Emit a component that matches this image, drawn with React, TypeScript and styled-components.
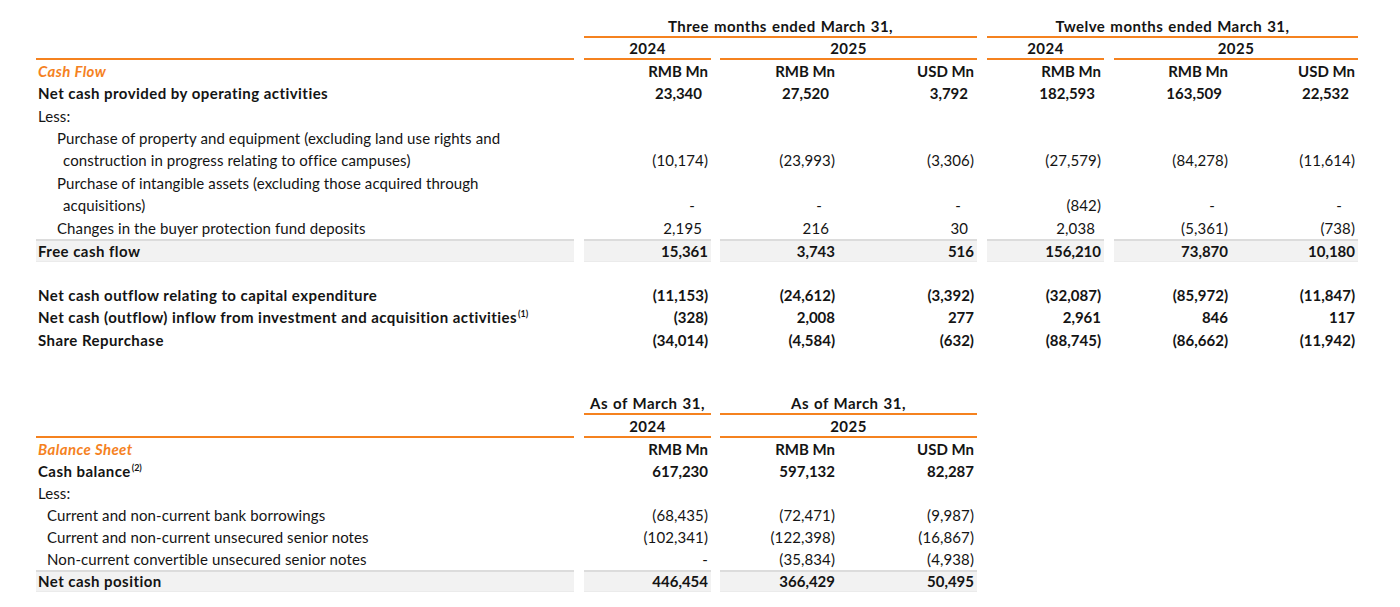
import React from 'react';
import styled, { createGlobalStyle, css } from 'styled-components';

const ORANGE = '#f5821f';

const GlobalStyle = createGlobalStyle`
  html, body { margin: 0; padding: 0; background: #fff; }
  body { font-family: Lato, "Open Sans", sans-serif; color: #141414; font-size: 15px; }
`;

const Page = styled.div`
  width: 1400px;
  height: 607px;
  box-sizing: border-box;
  padding: 16px 0 0 36px;
  display: flex;
  flex-direction: column;
  overflow: hidden;
`;

const Section = styled.section<{ $after?: number }>`
  display: flex;
  flex-direction: column;
  margin-bottom: ${(p) => p.$after ?? 0}px;
`;

const Row = styled.div<{ $h?: number }>`
  display: grid;
  grid-template-columns: 538px 10px 127px 9px 118px 139px 10px 117px 10px 117px 127px;
  height: ${(p) => p.$h ?? 22}px;
  align-items: stretch;
`;

const cellBase = css<{ $col: number; $span?: number }>`
  grid-column: ${(p) => p.$col} / span ${(p) => p.$span ?? 1};
  box-sizing: border-box;
  display: flex;
  white-space: nowrap;
  min-width: 0;
`;

const totalStyle = css`
  background: #f2f2f2;
  border-top: 2px solid #dcdcdc;
  border-bottom: 1px solid #ebebeb;
`;

const GroupHead = styled.div<{ $col: number; $span?: number; $rule?: boolean }>`
  ${cellBase};
  justify-content: center;
  align-items: center;
  font-weight: 700;
  letter-spacing: 0.45px;
  word-spacing: 1px;
  border-bottom: ${(p) => (p.$rule ? `2px solid ${ORANGE}` : 'none')};
`;

const SectionTitle = styled.div<{ $col: number; $span?: number }>`
  ${cellBase};
  align-items: center;
  padding-left: 2px;
  color: ${ORANGE};
  font-style: italic;
  font-weight: 700;
  letter-spacing: 0.4px;
`;

const Unit = styled.div<{ $col: number; $span?: number }>`
  ${cellBase};
  align-items: center;
  justify-content: flex-end;
  padding-right: 3px;
  font-weight: 700;
`;

const Label = styled.div<{ $col: number; $span?: number; $indent?: number; $bold?: boolean; $total?: boolean }>`
  ${cellBase};
  flex-direction: column;
  justify-content: flex-end;
  padding-left: ${(p) => 2 + (p.$indent ?? 0)}px;
  font-weight: ${(p) => (p.$bold ? 700 : 400)};
  letter-spacing: ${(p) => (p.$bold ? 0.45 : 0.1)}px;
  ${(p) => p.$total && totalStyle};
`;

const Line = styled.span<{ $cont?: boolean; $lh: number }>`
  display: block;
  height: ${(p) => p.$lh}px;
  line-height: ${(p) => p.$lh}px;
  padding-left: ${(p) => (p.$cont ? 6 : 0)}px;
`;

const Num = styled.div<{ $col: number; $span?: number; $pad?: number; $bold?: boolean; $total?: boolean; $lh: number }>`
  ${cellBase};
  align-items: flex-end;
  justify-content: flex-end;
  padding-right: ${(p) => 3 + (p.$pad ?? 0)}px;
  font-weight: ${(p) => (p.$bold ? 700 : 400)};
  letter-spacing: ${(p) => (p.$bold ? 0 : 0.1)}px;
  line-height: ${(p) => p.$lh}px;
  ${(p) => p.$total && totalStyle};
`;

const Sup = styled.sup`
  font-size: 9px;
  line-height: 0;
  vertical-align: 6px;
  margin-left: 1px;
  letter-spacing: 0;
`;

const CF_COLS = [3, 5, 6, 8, 10, 11];
const BS_COLS = [3, 5, 6];

type RowData = {
  label?: string[];
  sup?: string;
  indent?: number;
  bold?: boolean;
  total?: boolean;
  vals?: string[];
  pos?: number; // padding for positive values (accounting)
  dash?: number; // padding for dashes
  h?: number;
};

const cashFlow: RowData[] = [
  { label: ['Net cash provided by operating activities'], bold: true, pos: 6, h: 22.5, vals: ['23,340', '27,520', '3,792', '182,593', '163,509', '22,532'] },
  { label: ['Less:'] },
  {
    label: ['Purchase of property and equipment (excluding land use rights and', 'construction in progress relating to office campuses)'],
    indent: 19, h: 45,
    vals: ['(10,174)', '(23,993)', '(3,306)', '(27,579)', '(84,278)', '(11,614)'],
  },
  {
    label: ['Purchase of intangible assets (excluding those acquired through', 'acquisitions)'],
    indent: 19, h: 45, dash: 13,
    vals: ['-', '-', '-', '(842)', '-', '-'],
  },
  { label: ['Changes in the buyer protection fund deposits'], indent: 19, pos: 6, vals: ['2,195', '216', '30', '2,038', '(5,361)', '(738)'] },
  { label: ['Free cash flow'], bold: true, total: true, h: 23, vals: ['15,361', '3,743', '516', '156,210', '73,870', '10,180'] },
  { h: 22 },
  { label: ['Net cash outflow relating to capital expenditure'], bold: true, h: 22.5, vals: ['(11,153)', '(24,612)', '(3,392)', '(32,087)', '(85,972)', '(11,847)'] },
  { label: ['Net cash (outflow) inflow from investment and acquisition activities'], sup: '(1)', bold: true, h: 22.5, vals: ['(328)', '2,008', '277', '2,961', '846', '117'] },
  { label: ['Share Repurchase'], bold: true, h: 22.5, vals: ['(34,014)', '(4,584)', '(632)', '(88,745)', '(86,662)', '(11,942)'] },
];

const balance: RowData[] = [
  { label: ['Cash balance'], sup: '(2)', bold: true, vals: ['617,230', '597,132', '82,287'] },
  { label: ['Less:'] },
  { label: ['Current and non-current bank borrowings'], indent: 9, vals: ['(68,435)', '(72,471)', '(9,987)'] },
  { label: ['Current and non-current unsecured senior notes'], indent: 9, vals: ['(102,341)', '(122,398)', '(16,867)'] },
  { label: ['Non-current convertible unsecured senior notes'], indent: 9, vals: ['-', '(35,834)', '(4,938)'] },
  { label: ['Net cash position'], bold: true, total: true, h: 22, vals: ['446,454', '366,429', '50,495'] },
];

function padFor(v: string, r: RowData) {
  if (v === '-') return r.dash ?? 0;
  if (v.startsWith('(')) return 0;
  return r.pos ?? 0;
}

function DataRow({ r, cols }: { r: RowData; cols: number[] }) {
  const h = r.h ?? 22;
  const lines = r.label?.length ?? 1;
  const lh = r.total ? h - 3 : h / lines;
  const numLh = r.total ? h - 3 : lines > 1 ? h / lines : h;
  return (
    <Row $h={h}>
      {r.label ? (
        <Label $col={1} $indent={r.indent} $bold={r.bold} $total={r.total}>
          {r.label.map((t, i) => (
            <Line key={i} $lh={lh} $cont={i > 0 && !!r.indent}>
              {t}
              {r.sup && i === r.label!.length - 1 ? <Sup>{r.sup}</Sup> : null}
            </Line>
          ))}
        </Label>
      ) : null}
      {r.vals
        ? r.vals.map((v, i) => (
            <Num key={i} $col={cols[i]} $lh={numLh} $bold={r.bold} $total={r.total} $pad={padFor(v, r)}>
              {v}
            </Num>
          ))
        : null}
    </Row>
  );
}

export default function App() {
  return (
    <>
      <GlobalStyle />
      <Page>
        <Section $after={42}>
          <Row $h={22}>
            <GroupHead $col={3} $span={4} $rule>
              Three months ended March 31,
            </GroupHead>
            <GroupHead $col={8} $span={4} $rule>
              Twelve months ended March 31,
            </GroupHead>
          </Row>
          <Row $h={22}>
            <GroupHead $col={1} $rule />
            <GroupHead $col={3} $rule>2024</GroupHead>
            <GroupHead $col={5} $span={2} $rule>2025</GroupHead>
            <GroupHead $col={8} $rule>2024</GroupHead>
            <GroupHead $col={10} $span={2} $rule>2025</GroupHead>
          </Row>
          <Row $h={22}>
            <SectionTitle $col={1}>Cash Flow</SectionTitle>
            <Unit $col={3}>RMB Mn</Unit>
            <Unit $col={5}>RMB Mn</Unit>
            <Unit $col={6}>USD Mn</Unit>
            <Unit $col={8}>RMB Mn</Unit>
            <Unit $col={10}>RMB Mn</Unit>
            <Unit $col={11}>USD Mn</Unit>
          </Row>
          {cashFlow.map((r, i) => (
            <DataRow key={i} r={r} cols={CF_COLS} />
          ))}
        </Section>
        <Section>
          <Row $h={22}>
            <GroupHead $col={3} $rule>As of March 31,</GroupHead>
            <GroupHead $col={5} $span={2} $rule>As of March 31,</GroupHead>
          </Row>
          <Row $h={23}>
            <GroupHead $col={1} $rule />
            <GroupHead $col={3} $rule>2024</GroupHead>
            <GroupHead $col={5} $span={2} $rule>2025</GroupHead>
          </Row>
          <Row $h={22}>
            <SectionTitle $col={1}>Balance Sheet</SectionTitle>
            <Unit $col={3}>RMB Mn</Unit>
            <Unit $col={5}>RMB Mn</Unit>
            <Unit $col={6}>USD Mn</Unit>
          </Row>
          {balance.map((r, i) => (
            <DataRow key={i} r={r} cols={BS_COLS} />
          ))}
        </Section>
      </Page>
    </>
  );
}
